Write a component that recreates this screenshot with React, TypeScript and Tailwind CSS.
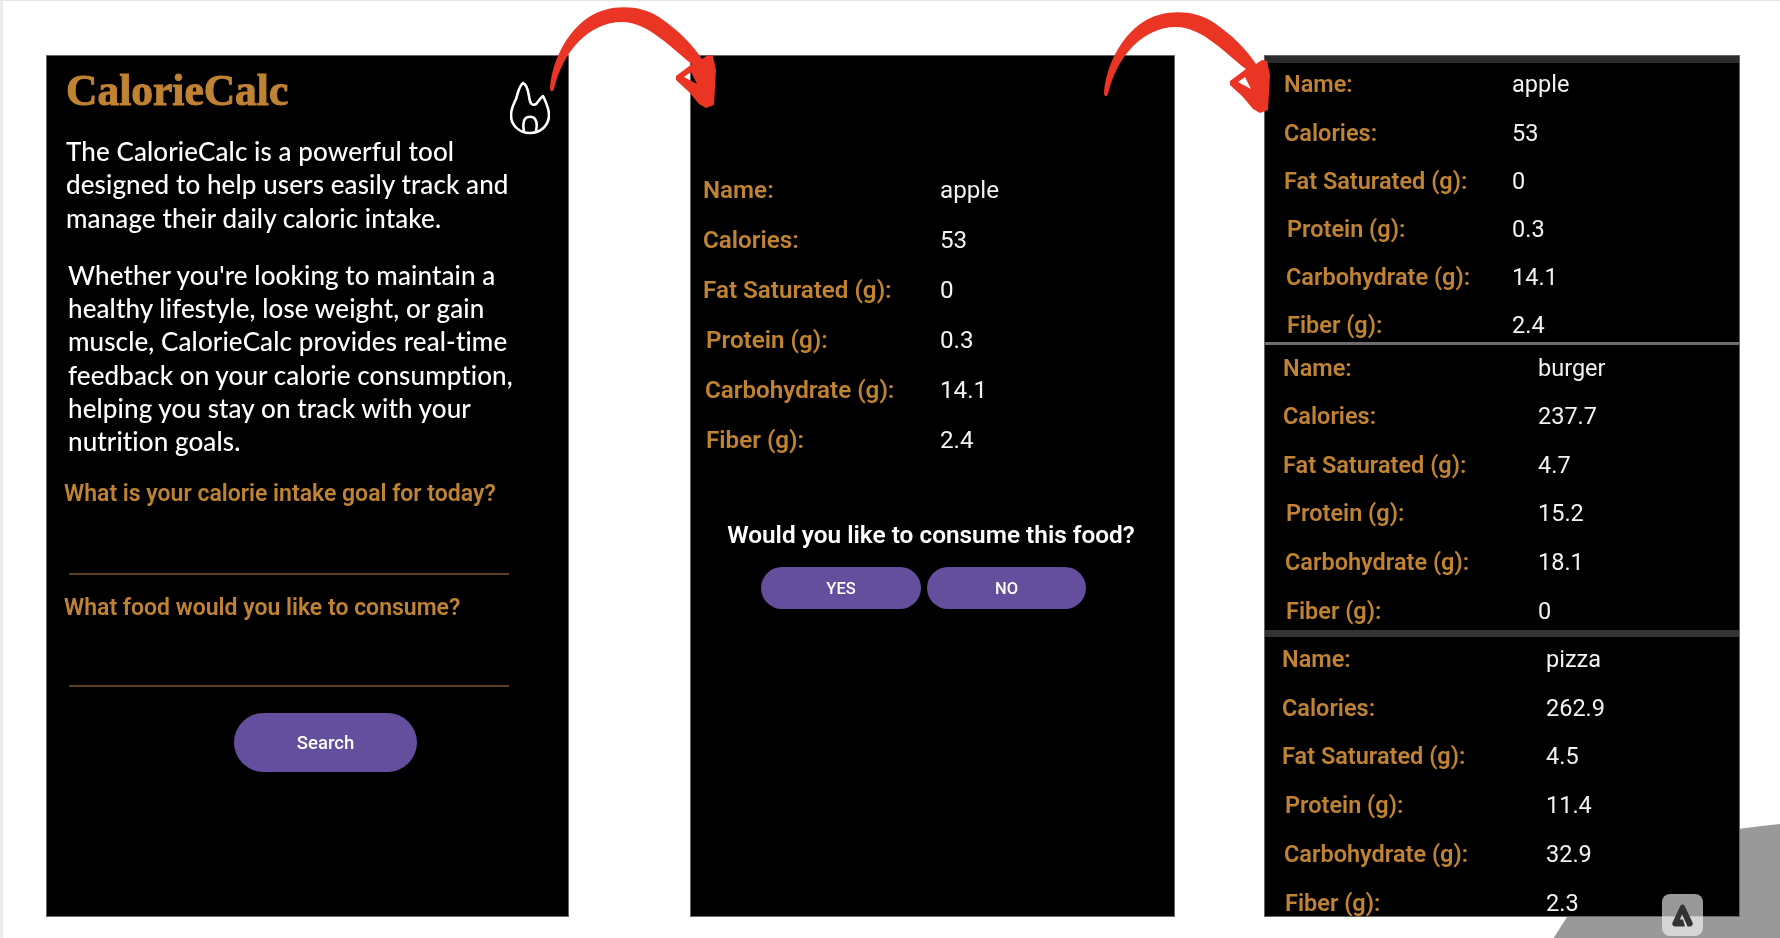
const Orange = "text-[#c08233]";

type Row = [string, string, string];

const apple: Row[] = [
  ["Name:", "apple", ""],
  ["Calories:", "53", ""],
  ["Fat Saturated (g):", "0", ""],
  ["Protein (g):", "0.3", "ml-[3px]"],
  ["Carbohydrate (g):", "14.1", "ml-[2px]"],
  ["Fiber (g):", "2.4", "ml-[3px]"],
];
const burger: Row[] = [
  ["Name:", "burger", ""],
  ["Calories:", "237.7", ""],
  ["Fat Saturated (g):", "4.7", ""],
  ["Protein (g):", "15.2", "ml-[3px]"],
  ["Carbohydrate (g):", "18.1", "ml-[2px]"],
  ["Fiber (g):", "0", "ml-[3px]"],
];
const pizza: Row[] = [
  ["Name:", "pizza", ""],
  ["Calories:", "262.9", ""],
  ["Fat Saturated (g):", "4.5", ""],
  ["Protein (g):", "11.4", "ml-[3px]"],
  ["Carbohydrate (g):", "32.9", "ml-[2px]"],
  ["Fiber (g):", "2.3", "ml-[3px]"],
];

function FoodRows({ rows, rowClass, labelClass }: { rows: Row[]; rowClass: string; labelClass: string }) {
  return (
    <>
      {rows.map(([label, value, nudge]) => (
        <div key={label} className={`flex items-center shrink-0 ${rowClass}`}>
          <div className={`${labelClass} shrink-0`}>
            <span className={`inline-block ${Orange} ${nudge} font-semibold`}>{label}</span>
          </div>
          <span className="text-[#f2f2f2]">{value}</span>
        </div>
      ))}
    </>
  );
}

function Arrow({ className }: { className: string }) {
  return (
    <svg viewBox="0 0 170 106" className={`absolute z-20 w-[170px] h-[106px] ${className}`}>
      <path
        fillRule="evenodd"
        fill="#ea3424"
        d="M1 83C3 57 17 27 40 12C60 -1 90 -1 110 12C128 24 144 40 153 54L159 50L164 51L167 65L165 100L157 103L150 99L140 87L127 75L127 71L143 59C125 46 100 17 73 17C40 17 14 46 5 84C4 87 1 87 1 83ZM135 72L148 79L142 67Z"
      />
    </svg>
  );
}

function Flame() {
  return (
    <svg viewBox="0 0 40 54" className="w-[40px] h-[54px]" fill="none" stroke="#fff" strokeWidth="2.6" strokeLinejoin="round">
      <path d="M13 2C9 5 8 12 6 18C3 24 1 28 1 34C1 45 10 52 20 52C31 52 39 44 39 34C39 27 36 21 33 15C30 17 28 21 26 23C22 25 20 23 19 15C18 9 16 3 13 2Z" />
      <path d="M14 50C13 46 13 40 15 38C17 35 23 35 25 38C27 41 27 46 26 50" />
    </svg>
  );
}

export default function App() {
  return (
    <div className="relative w-[1780px] h-[938px] overflow-hidden bg-white border-t border-[#e6e6e6] font-['Roboto',sans-serif]">
      <div className="absolute left-0 top-0 bottom-0 w-[3px] bg-[#ececec]" />
      <svg viewBox="0 0 1780 938" className="absolute inset-0 w-[1780px] h-[938px]">
        <path d="M1553 938L1567 916C1610 860 1680 832 1780 823V938Z" fill="#999999" />
      </svg>

      <Arrow className="left-[549px] top-[4px]" />
      <Arrow className="left-[1103px] top-[9px]" />

      <div className="relative flex items-start pl-[46px] pt-[54px]">
        {/* first screen */}
        <div className="relative z-10 w-[523px] h-[862px] bg-black border border-[#666] shrink-0 blur-[0.4px]">
          <div className="flex items-start justify-between pl-[19px] pr-[18px] pt-[11px]">
            <h1 className={`${Orange} font-['Liberation_Serif',serif] font-bold text-[43.5px] leading-[46px] [-webkit-text-stroke:1px_#c08233]`}>
              CalorieCalc
            </h1>
            <div className="mt-[14px]">
              <Flame />
            </div>
          </div>
          <div className="pl-[19px] font-['Lato',sans-serif] font-medium text-[26px] tracking-[0.1px] leading-[33.3px] text-white">
            <p className="w-[468px]">
              The CalorieCalc is a powerful tool designed to help users easily track and manage their daily caloric intake.
            </p>
            <p className="w-[468px] mt-[24px] ml-[2px]">
              Whether you're looking to maintain a healthy lifestyle, lose weight, or gain muscle, CalorieCalc provides real-time feedback on your calorie consumption, helping you stay on track with your nutrition goals.
            </p>
          </div>
          <div className="pl-[17px] mt-[20px]">
            <div className={`${Orange} font-semibold text-[23px] leading-[30px]`}>What is your calorie intake goal for today?</div>
            <div className="mt-[64px] ml-[5px] w-[440px] h-[2px] bg-[#5c3f1d]" />
            <div className={`${Orange} font-semibold text-[23px] leading-[30px] mt-[18px]`}>What food would you like to consume?</div>
            <div className="mt-[62px] ml-[5px] w-[440px] h-[2px] bg-[#5c3f1d]" />
          </div>
          <button className="block mt-[26px] ml-[187px] w-[183px] h-[59px] pt-[3px] rounded-full bg-[#634f9e] text-white font-medium text-[18.5px]">
            Search
          </button>
        </div>

        {/* second screen */}
        <div className="relative z-10 ml-[121px] w-[485px] h-[862px] bg-black border border-[#666] shrink-0 pt-[109px] pl-[12px] blur-[0.4px]">
          <FoodRows rows={apple} rowClass="h-[50.1px] text-[24.2px]" labelClass="w-[237px]" />
          <div className="mt-[53px] -ml-[15px] text-center text-white font-semibold text-[24.4px] leading-[32px]">
            Would you like to consume this food?
          </div>
          <div className="mt-[16px] ml-[58px] flex gap-[6px]">
            <button className="w-[160px] h-[42px] pt-[3px] rounded-full bg-[#634f9e] text-white font-medium text-[16.5px]">YES</button>
            <button className="w-[159px] h-[42px] pt-[3px] rounded-full bg-[#634f9e] text-white font-medium text-[16.5px]">NO</button>
          </div>
        </div>

        {/* third screen */}
        <div className="relative z-10 ml-[89px] w-[476px] h-[862px] bg-black border border-[#666] shrink-0 overflow-hidden flex flex-col blur-[0.4px]">
          <div className="h-[7px] bg-[#2c2c2c] shrink-0" />
          <div className="h-[281px] -mt-[2px] shrink-0 pl-[19px] overflow-hidden">
            <FoodRows rows={apple} rowClass="h-[48.2px] text-[23.5px]" labelClass="w-[228px]" />
          </div>
          <div className="h-[3px] bg-[#6e6e6e] shrink-0" />
          <div className="h-[286px] -mt-px shrink-0 pl-[18px] overflow-hidden">
            <FoodRows rows={burger} rowClass="h-[48.6px] text-[23.5px]" labelClass="w-[255px]" />
          </div>
          <div className="h-[7px] bg-[#333] shrink-0" />
          <div className="pl-[17px] -mt-[2px] min-h-0">
            <FoodRows rows={pizza} rowClass="h-[48.8px] text-[23.5px]" labelClass="w-[264px]" />
          </div>
        </div>
      </div>

      {/* floating badge */}
      <div className="absolute z-30 left-[1662px] top-[893px] w-[41px] h-[42px] rounded-[8px] bg-white/60 flex items-center justify-center">
        <svg viewBox="0 0 21 23" className="w-[21px] h-[23px]">
          <path d="M8.5 1.5C9.5 0 11.5 0 12.5 1.5L20.5 18.5C21.5 21 19.5 23 17.5 22.5H15.5L10 10L8 15.5H11L13 22.5H3C1 22.5 -0.3 20.5 0.5 18.5Z" fill="#333" />
        </svg>
      </div>
    </div>
  );
}
